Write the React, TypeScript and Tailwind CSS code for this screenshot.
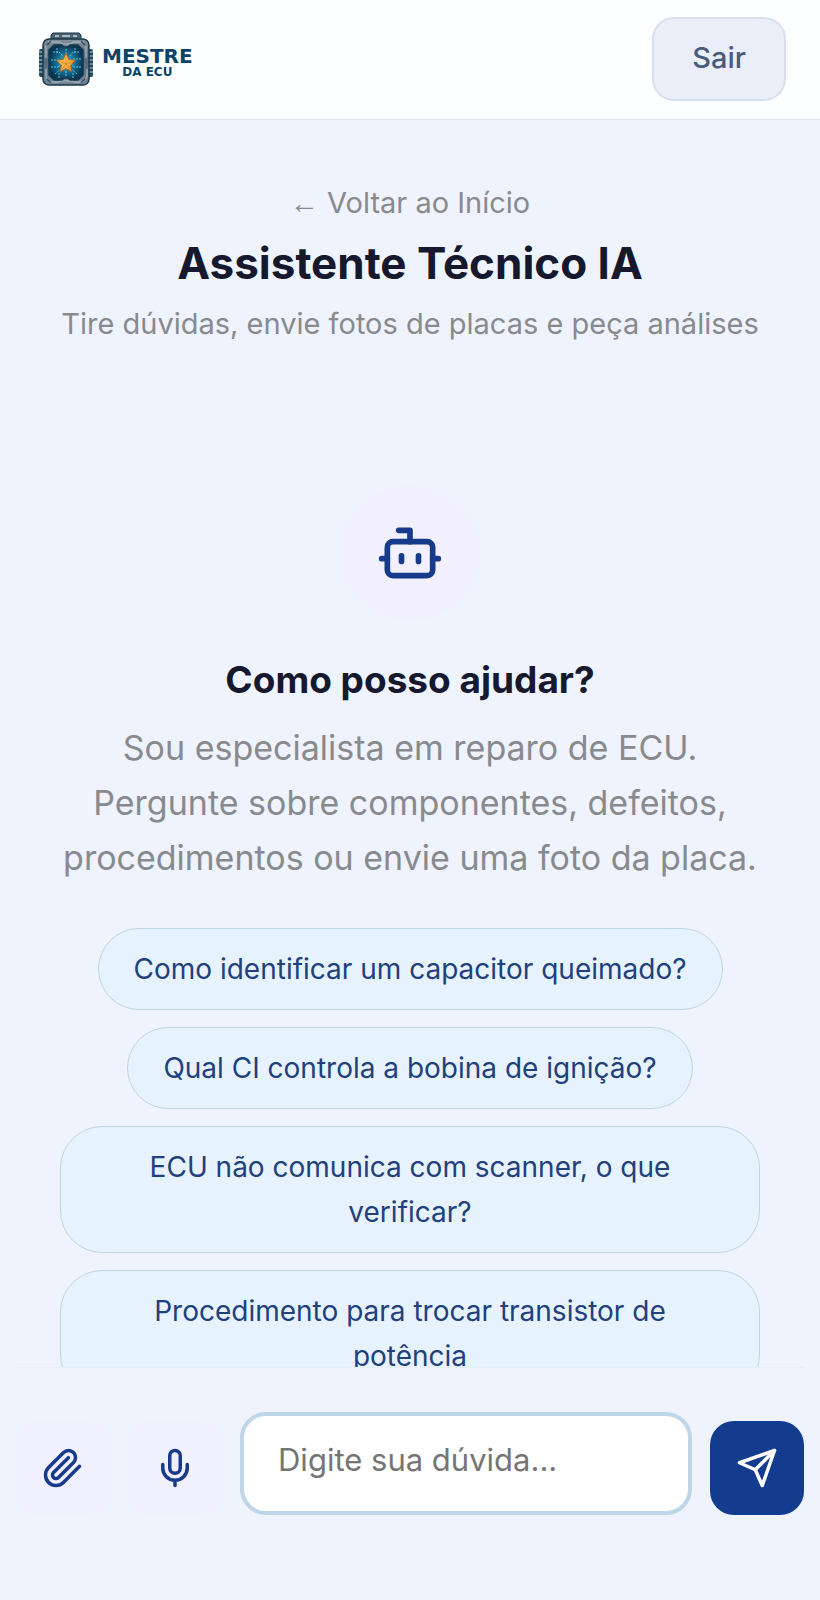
import type { ReactNode } from 'react';

const suggestions = [
  'Como identificar um capacitor queimado?',
  'Qual CI controla a bobina de ignição?',
  'ECU não comunica com scanner, o que verificar?',
  'Procedimento para trocar transistor de potência',
];

function Icon({ className, children }: { className: string; children: ReactNode }) {
  return (
    <svg
      className={className}
      viewBox="0 0 24 24"
      fill="none"
      stroke="currentColor"
      strokeWidth="2"
      strokeLinecap="round"
      strokeLinejoin="round"
      aria-hidden="true"
    >
      {children}
    </svg>
  );
}

function ChipLogo() {
  return (
    <svg className="h-[54px] w-14" viewBox="0 0 56 54" aria-hidden="true">
      <defs>
        <linearGradient id="metal" x1="0" y1="0" x2="0" y2="1">
          <stop offset="0" stopColor="#7f8f9b" />
          <stop offset="0.5" stopColor="#556a7a" />
          <stop offset="1" stopColor="#728896" />
        </linearGradient>
        <radialGradient id="core">
          <stop offset="0" stopColor="#5cc3da" />
          <stop offset="0.5" stopColor="#15779c" />
          <stop offset="1" stopColor="#0a3654" />
        </radialGradient>
        <linearGradient id="star" x1="0" y1="0" x2="1" y2="1">
          <stop offset="0" stopColor="#ffdc7a" />
          <stop offset="1" stopColor="#ee8a16" />
        </linearGradient>
      </defs>
      {/* Side pins */}
      <rect x="1" y="17" width="7" height="28" rx="2" fill="#22485b" />
      <rect x="48" y="17" width="7" height="28" rx="2" fill="#22485b" />
      <path
        d="M1 20h5M1 24h5M1 28h5M1 32h5M1 36h5M1 40h5M50 20h5M50 24h5M50 28h5M50 32h5M50 36h5M50 40h5"
        stroke="#7fa6b5"
        strokeWidth="1.5"
      />
      {/* Top connector */}
      <path d="M13 9V3l2-2h26l2 2v6z" fill="#4b6373" stroke="#193848" />
      <path d="M17 4h4M24 4h8M35 4h4" stroke="#a9bac3" strokeWidth="2" />
      {/* Body */}
      <rect x="5" y="7" width="46" height="46" rx="6" fill="url(#metal)" stroke="#1b3849" strokeWidth="1.5" />
      <path
        d="M10 10h12l3 2h7l3-2h11M8 14v12M48 14v12M8 37v8l4 5h9l3-1h9l3 1h9l4-5v-8"
        fill="none"
        stroke="#b3c0c8"
        strokeWidth="1"
      />
      <path
        d="M16 13h8l2 2h4l2-2h8l5 5v25l-5 5h-8l-2-2h-4l-2 2h-8l-5-5V18z"
        fill="url(#core)"
        stroke="#15384c"
        strokeWidth="1.5"
      />
      <path
        d="M15 20h6l4 4M41 20h-6l-3 4M13 28h8M43 27h-8M13 35h7l3-3M43 35h-7l-3-3M17 42l7-6M39 42l-7-6M28 17v6M28 44v-7M19 16v5M37 16v5M21 46v-6M35 46v-6"
        fill="none"
        stroke="#5cc3da"
        strokeWidth="1"
        strokeDasharray="2 1"
      />
      <path
        d="M28 21l2.8 6.5 7 .8-5.2 4.8 1.4 7-6-3.6-6 3.6 1.4-7-5.2-4.8 7-.8z"
        fill="url(#star)"
        stroke="#a25513"
        strokeWidth="0.8"
        strokeLinejoin="round"
      />
      <path d="M28 22v10l5.5 7M28 32l9-3.5M28 32l-9-3.5M28 32l-5.5 7" fill="none" stroke="#c66e12" strokeWidth="0.5" />
      <path d="M9 13l4-4M47 13l-4-4M9 47l4 4M47 47l-4 4" stroke="#2c4757" strokeWidth="1.2" />
    </svg>
  );
}

export default function App() {
  return (
    <div className="flex h-screen flex-col overflow-hidden bg-[#eef3fe] font-['Inter',sans-serif]">
      {/* Header */}
      <header className="flex items-center justify-between border-b border-[#e1e7f2] bg-[#fdfeff] px-[34px] pt-[17px] pb-[18px]">
        <a href="#" className="ml-1 flex items-center gap-2">
          <ChipLogo />
          <span className="flex flex-col items-center pt-2 font-['DejaVu_Sans',sans-serif] font-bold text-[#0b4468]">
            <span className="text-[20px] leading-[18px]">MESTRE</span>
            <span className="text-[12px] leading-[14px]">DA ECU</span>
          </span>
        </a>
        <button className="h-[84px] rounded-[22px] border-2 border-[#d9e0ed] bg-[#e9eef8] px-[38px] pb-[2px] text-[29px] font-medium text-[#475b7c]">
          Sair
        </button>
      </header>

      {/* Page title */}
      <div className="flex flex-col items-center px-4 pt-[60px] text-center">
        <a href="#" className="text-[29px] leading-[45px] text-[#888a8e]">
          <span className="font-['Liberation_Sans',sans-serif] leading-none">←</span> Voltar ao Início
        </a>
        <h1 className="mt-[10px] text-[44px] leading-[56px] font-bold text-[#16182d]">Assistente Técnico IA</h1>
        <p className="mt-[10px] text-[29px] leading-[45px] text-[#888a8e]">
          Tire dúvidas, envie fotos de placas e peça análises
        </p>
      </div>

      {/* Empty chat */}
      <main className="flex min-h-0 flex-1 flex-col items-center overflow-hidden px-[60px] pt-[139px] text-center">
        <div className="flex size-[136px] shrink-0 items-center justify-center rounded-full bg-[#f2f0fe]">
          <Icon className="size-[68px] text-[#173a8a]">
            <path d="M12 8V4H8" />
            <rect width="16" height="12" x="4" y="8" rx="2" />
            <path d="M2 14h2M20 14h2M15 13v2M9 13v2" />
          </Icon>
        </div>
        <h2 className="mt-[31px] text-[37px] leading-[56px] font-bold text-[#16182d]">Como posso ajudar?</h2>
        <p className="mt-3 text-[34px] leading-[55px] text-[#888a8e]">
          Sou especialista em reparo de ECU. Pergunte sobre componentes, defeitos, procedimentos ou envie uma foto da
          placa.
        </p>
        <div className="mt-[43px] flex flex-col items-center gap-[17px]">
          {suggestions.map((text) => (
            <button
              key={text}
              className="rounded-[42px] border border-[#bfd5e4] bg-[#e6f3fe] px-[35px] pt-[18px] pb-[17px] text-[28px] leading-[45px] text-[#21407c]"
            >
              {text}
            </button>
          ))}
        </div>
      </main>

      {/* Message box */}
      <form className="px-4" onSubmit={(e) => e.preventDefault()}>
        <div className="flex items-end gap-[18px] border-t border-[#e9eef6] pt-11 pb-[85px]">
          <button
            type="button"
            aria-label="Anexar foto"
            className="flex size-[94px] shrink-0 items-center justify-center rounded-3xl bg-[#f1f0fe] text-[#173a8a]"
          >
            <Icon className="size-[42px]">
              <path d="m21.44 11.05-9.19 9.19a6 6 0 0 1-8.49-8.49l8.57-8.57A4 4 0 1 1 18 8.84l-8.59 8.57a2 2 0 0 1-2.83-2.83l8.49-8.48" />
            </Icon>
          </button>
          <button
            type="button"
            aria-label="Gravar áudio"
            className="flex size-[94px] shrink-0 items-center justify-center rounded-3xl bg-[#f1f0fe] text-[#173a8a]"
          >
            <Icon className="size-[42px]">
              <path d="M12 2a3 3 0 0 0-3 3v7a3 3 0 0 0 6 0V5a3 3 0 0 0-3-3Z" />
              <path d="M19 10v2a7 7 0 0 1-14 0v-2M12 19v3" />
            </Icon>
          </button>
          <input
            type="text"
            aria-label="Digite sua dúvida"
            placeholder="Digite sua dúvida..."
            className="h-[103px] min-w-0 flex-1 rounded-[26px] border-4 border-[#bfd6e8] bg-white px-[34px] pb-2 text-[31px] text-[#16182d] outline-none placeholder:text-[#757575]"
          />
          <button
            type="submit"
            aria-label="Enviar"
            className="flex size-[94px] shrink-0 items-center justify-center rounded-3xl bg-[#133c8f] text-white"
          >
            <Icon className="size-[42px]">
              <path d="m22 2-7 20-4-9-9-4Z" />
              <path d="M22 2 11 13" />
            </Icon>
          </button>
        </div>
      </form>
    </div>
  );
}
